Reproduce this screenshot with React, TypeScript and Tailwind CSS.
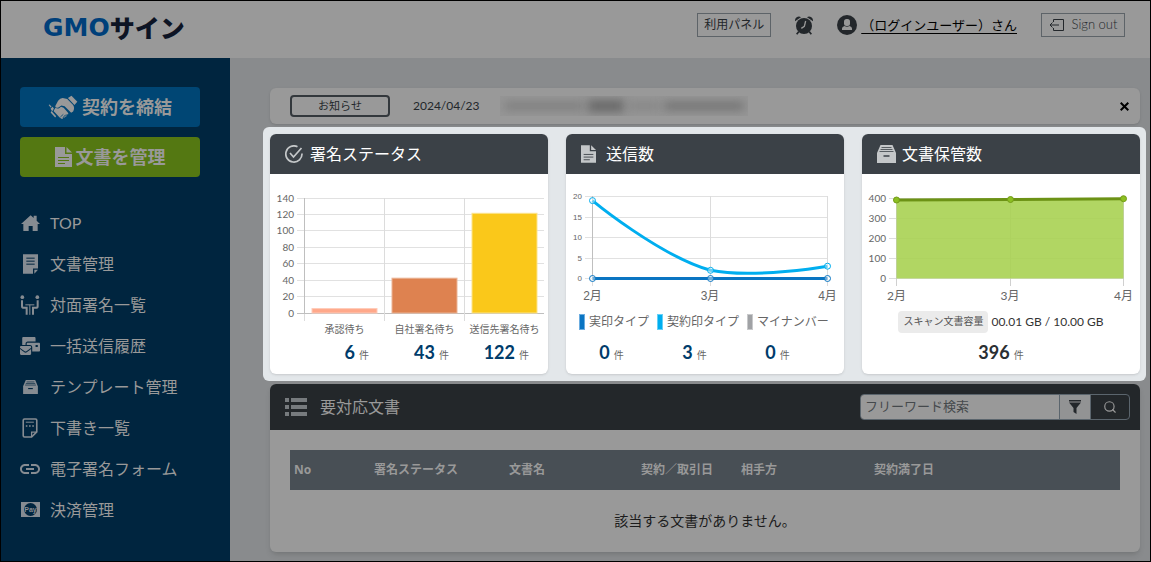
import type { ReactNode } from "react";
import { Search } from "lucide-react";
import { FaMailBulk } from "react-icons/fa";
import { MdLink } from "react-icons/md";

/* ---------- Icons ---------- */

function HandshakeIcon() {
  return (
    <svg className="w-[30px] h-[25px]" viewBox="142 282 92 76" fill="currentColor">
      <path d="M203 291l11-7 18 18-9 10z" />
      <path d="M201 294l-14-3q-8 0-14 8l-9 17q2 7 10 4l9-6 10 2 20 20 6-4q6-12 0-20z" />
      <path d="M165 321l-6 10 18 19q4 4 8 5 5-1 3-5 5 2 7-2 5 0 5-5 6-1 4-6l-14-16-8-3-6 4q-6 3-11-1z" />
      <path d="M150 324l6-6 4 5-5 9z" />
      <path d="M144 312l3-1 6 7-3 2z" />
      <path d="M153 331l14 16-3 4-14-16z" />
      <path d="M180 349l9-8M188 351l8-9M195 347l7-7" stroke="#004674" strokeWidth="2.5" fill="none" />
    </svg>
  );
}

function FileIcon({ className, line }: { className: string; line: string }) {
  return (
    <svg className={className} viewBox="0 0 17 20" fill="currentColor">
      <path d="M0 0h10v7h7v13H0z" />
      <path d="M11.5 0v5.500h5.500z" />
      <path d="M3 10.500h11M3 13.500h11M3 16.500h7" stroke={line} strokeWidth="1" />
    </svg>
  );
}

function BoxIcon({ className, line }: { className: string; line: string }) {
  return (
    <svg className={className} viewBox="0 0 19 18" fill="currentColor">
      <path d="M3.500 0h12L19 8v10H0V8z" />
      <path d="M4.500 2.500h10M3.500 4.500h12M2.500 6.500h14" stroke={line} strokeWidth="0.8" />
      <path d="M6.500 11h6" stroke={line} strokeWidth="1.500" />
    </svg>
  );
}

function CheckCircleIcon() {
  return (
    <svg className="size-[18px]" viewBox="0 0 18 18" fill="none" stroke="currentColor" strokeWidth="1.700">
      <path d="M12.500 1.700A8.100 8.100 0 1 0 17 8.500" />
      <path d="M5 8l3.500 4L16.500 3" />
    </svg>
  );
}

function HomeIcon() {
  return (
    <svg className="w-[19px] h-4" viewBox="60 75 57 48" fill="currentColor">
      <path d="M60 102l29-26 9 8v-7h9v15l10 10h-7v21H95v-15H83v15H67v-21z" />
    </svg>
  );
}

function NoteIcon() {
  return (
    <svg className="w-[15px] h-5" viewBox="66 192 45 59" fill="currentColor">
      <path d="M66 192h45v43H96v16H66z" />
      <path d="M100 239h11l-11 12z" />
      <path d="M76 204h25M76 213h25M76 222h25" stroke="#00253f" strokeWidth="3" />
    </svg>
  );
}

function MeetingIcon() {
  return (
    <svg className="size-5" viewBox="61 317 60 59" fill="none" stroke="currentColor">
      <circle cx="68" cy="323" r="5.500" fill="currentColor" stroke="none" />
      <circle cx="113" cy="323" r="5.500" fill="currentColor" stroke="none" />
      <path d="M67 332v18q0 5 6 5h8v21M114 332v18q0 5-6 5h-8v21" strokeWidth="6" />
      <path d="M77 346h27M90.500 346v30" strokeWidth="3" />
    </svg>
  );
}

function DraftIcon() {
  return (
    <svg className="w-4 h-5" viewBox="66 683 48 62" fill="none" stroke="currentColor" strokeWidth="5">
      <path d="M111 726v-36q0-4-4-4H73q-4 0-4 4v48q0 4 4 4h22z" />
      <path d="M95 742v-15h16" strokeWidth="4" />
      <path d="M77 696h25" strokeWidth="3" />
      <path d="M77 708h26" strokeDasharray="5 5" />
    </svg>
  );
}

function PayIcon() {
  return (
    <svg className="w-[19px] h-[15px]" viewBox="0 0 19 15">
      <rect width="19" height="15" fill="currentColor" />
      <circle cx="9.500" cy="7.500" r="6.500" fill="#00253f" />
      <text x="9.500" y="10" textAnchor="middle" fontSize="7" fontWeight="bold" fontFamily="Liberation Sans" fill="currentColor">
        Pay
      </text>
    </svg>
  );
}

function AlarmIcon() {
  return (
    <svg className="w-[18px] h-[19px]" viewBox="348 43 54 57">
      <circle cx="375" cy="73" r="24" fill="#23272b" />
      <path d="M348 59q-1-9 6-13 7-3 12 1zM402 59q1-9-6-13-7-3-12 1z" fill="#23272b" />
      <path d="M359 90l-6 8M391 90l6 8" stroke="#23272b" strokeWidth="5" />
      <path d="M380 58l-4 16-9 6" stroke="#999" strokeWidth="4" fill="none" />
    </svg>
  );
}

function UserIcon() {
  return (
    <svg className="size-5" viewBox="0 0 20 20">
      <circle cx="10" cy="10" r="10" fill="#23272b" />
      <rect x="7" y="4" width="6" height="7" rx="2.500" fill="#999" />
      <path d="M5 15v-1.500q0-2 2.500-2.500 2.500 1.500 5 0 2.500.5 2.500 2.500V15z" fill="#999" />
    </svg>
  );
}

function SignOutIcon() {
  return (
    <svg className="w-[15px] h-3" viewBox="0 0 15 12" fill="none" stroke="currentColor">
      <path d="M4.500 3V.5h10v11h-10V9M10 6H1M3.500 3.500L1 6l2.500 2.500" />
    </svg>
  );
}

function ListIcon() {
  return (
    <svg className="w-[22px] h-[18px]" viewBox="0 0 22 18" fill="#777b7e">
      <path d="M0 0h4v4H0zM0 7h4v4H0zM0 14h4v4H0zM6 0h16v4H6zM6 7h16v4H6zM6 14h16v4H6z" />
    </svg>
  );
}

function FilterIcon() {
  return (
    <svg className="w-3 h-[14px]" viewBox="0 0 12 14" fill="currentColor">
      <path d="M0 0h12v1.500H0zM0 2.500h12L7.500 8v6l-3-2V8z" />
    </svg>
  );
}

/* ---------- Data ---------- */

const menu: { label: string; icon: ReactNode }[] = [
  { label: "TOP", icon: <HomeIcon /> },
  { label: "文書管理", icon: <NoteIcon /> },
  { label: "対面署名一覧", icon: <MeetingIcon /> },
  { label: "一括送信履歴", icon: <FaMailBulk className="size-5" /> },
  { label: "テンプレート管理", icon: <BoxIcon className="w-[15px] h-[14px]" line="#00253f" /> },
  { label: "下書き一覧", icon: <DraftIcon /> },
  { label: "電子署名フォーム", icon: <MdLink className="size-6 shrink-0" /> },
  { label: "決済管理", icon: <PayIcon /> },
];

const statusBars = [
  { label: "承認待ち", count: 6, x: 42, fill: "#ffa88a", edge: "#ffcbb9" },
  { label: "自社署名待ち", count: 43, x: 122, fill: "#de8250", edge: "#ebb496" },
  { label: "送信先署名待ち", count: 122, x: 202, fill: "#fac81a", edge: "#fce48d" },
];

const sendTypes = [
  { label: "実印タイプ", count: 0, swatch: "bg-[#0a75c2] border-[#6cade0]" },
  { label: "契約印タイプ", count: 3, swatch: "bg-[#00aeef] border-[#66d0f7]" },
  { label: "マイナンバー", count: 0, swatch: "bg-[#a0a2a5] border-[#c8c9cb]" },
];

const months = ["2月", "3月", "4月"];

/* ---------- Charts ---------- */

function StatusChart() {
  const bottom = 139.5;
  const unit = 115 / 140;
  return (
    <svg className="block w-full" viewBox="0 0 278 166" fontFamily="Lato, 'Noto Sans CJK JP', sans-serif" fontSize="10" fill="#666">
      {[0, 20, 40, 60, 80, 100, 120, 140].map((v) => (
        <g key={v}>
          <path d={`M27 ${Math.round(bottom - v * unit) - 0.5}H274`} stroke={v === 0 ? "#bfbfbf" : "#e1e1e1"} />
          <text x="24" y={bottom - v * unit + 3} textAnchor="end">{v}</text>
        </g>
      ))}
      <path d="M114.500 24V147M194.500 24V147M34.500 139V147" stroke="#dcdcdc" />
      <path d="M34.500 24V140" stroke="#bfbfbf" />
      {statusBars.map((b) => (
        <g key={b.label}>
          <rect x={b.x} y={bottom - b.count * unit} width="65" height={b.count * unit - 0.5} fill={b.fill} stroke={b.edge} />
          <text x={b.x + 32.5} y="159" textAnchor="middle">{b.label}</text>
        </g>
      ))}
    </svg>
  );
}

function SendChart() {
  return (
    <svg className="block w-full" viewBox="0 0 278 130" fontFamily="'Liberation Sans', 'Noto Sans CJK JP', sans-serif" fill="#666">
      {[0, 5, 10, 15, 20].map((v) => (
        <g key={v}>
          <path d={`M19 ${Math.round(104 - v * 4.1) + 0.5}H262`} stroke="#e1e1e1" />
          <text x="16" y={107 - v * 4.1} textAnchor="end" fontSize="8">{v}</text>
        </g>
      ))}
      <path d="M144.500 22V112M261.500 22V112M26.500 104V112" stroke="#dcdcdc" />
      <path d="M26.500 22V104" stroke="#bfbfbf" />
      <g fill="none" strokeWidth="3">
        <path d="M26.500 26.600C26.500 26.600 93.800 82.100 144.500 96.300C187.700 105 261.500 92.200 261.500 92.200" stroke="#00aeef" />
        <path d="M26.500 104.500H261.500" stroke="#0a75c2" />
      </g>
      <g fill="#fff" fillOpacity="0.4" stroke="#00aeef">
        <circle cx="26.500" cy="26.600" r="3" />
        <circle cx="144.500" cy="96.300" r="3" />
        <circle cx="261.500" cy="92.200" r="3" />
      </g>
      <g fill="#fff" fillOpacity="0.4" stroke="#0a75c2">
        <circle cx="26.500" cy="104.500" r="3" />
        <circle cx="144.500" cy="104.500" r="3" />
        <circle cx="261.500" cy="104.500" r="3" />
      </g>
      {months.map((m, i) => (
        <text key={m} x={26.5 + i * 117.5} y="126" textAnchor="middle" fontSize="12">{m}</text>
      ))}
    </svg>
  );
}

function StorageChart() {
  return (
    <svg className="block w-full" viewBox="0 0 278 130" fontFamily="Lato, 'Noto Sans CJK JP', sans-serif" fill="#666">
      {[0, 100, 200, 300, 400].map((v) => (
        <g key={v}>
          <path d={`M27 ${104.5 - v * 0.2}H262`} stroke="#dcdcdc" />
          <text x="24" y={107.5 - v * 0.2} textAnchor="end" fontSize="10">{v}</text>
        </g>
      ))}
      <path d="M34.500 24V112M148.500 24V112M261.500 24V112" stroke="#d0d0d0" />
      <path d="M34.500 26L148.500 25.500L261.500 24.700V104.500H34.500z" fill="#a9d252" fillOpacity="0.9" />
      <path d="M34.500 26L148.500 25.500L261.500 24.700" stroke="#6c9215" strokeWidth="3" fill="none" />
      <g fill="#8cbf22" stroke="#739b17">
        <circle cx="34.500" cy="26" r="3" />
        <circle cx="148.500" cy="25.500" r="3" />
        <circle cx="261.500" cy="24.700" r="3" />
      </g>
      {months.map((m, i) => (
        <text key={m} x={34.5 + i * 113.5} y="126" textAnchor="middle" fontSize="12">{m}</text>
      ))}
    </svg>
  );
}

/* ---------- Parts ---------- */

function Card({ title, icon, children }: { title: string; icon: ReactNode; children: ReactNode }) {
  return (
    <section className="bg-white rounded-md overflow-hidden shadow-sm pb-[10px]">
      <h2 className="h-10 pl-[15px] flex items-center bg-[#3b4147] text-white text-base">
        <span className="w-[25px] text-[#c4c7c9]">{icon}</span>
        {title}
      </h2>
      {children}
    </section>
  );
}

function Count({ value, className }: { value: number; className: string }) {
  return (
    <p className={`h-6 flex items-baseline gap-1 text-lg leading-6 font-bold ${className}`}>
      {value}
      <small className="text-[10px] leading-none font-normal text-[#666]">件</small>
    </p>
  );
}

function Header() {
  return (
    <header className="h-[57px] pl-[42px] pr-[25px] flex items-start justify-between bg-[#999]">
      <a href="#top" className="pt-[15px] flex items-center leading-6 font-black">
        <span className="font-['DejaVu_Sans'] font-bold text-[25px] text-[#00407a]">GMO</span>
        <span className="text-[25px] text-[#0d1424]">サイン</span>
      </a>
      <div className="pt-3 flex items-center gap-6 text-[#23272b]">
        <button className="h-6 w-[74px] border border-[#5d6368] text-xs">利用パネル</button>
        <button aria-label="通知"><AlarmIcon /></button>
        <a href="#user" className="flex items-center gap-1 text-[13px] leading-5 text-black">
          <UserIcon />
          <span className="underline underline-offset-3">（ログインユーザー）さん</span>
        </a>
        <button className="h-6 w-[84px] flex items-center justify-center gap-2 border border-[#5d6368] text-[13px] font-light">
          <SignOutIcon />
          Sign out
        </button>
      </div>
    </header>
  );
}

function Sidebar() {
  return (
    <aside className="w-[229px] shrink-0 pt-[29px] pl-[19px] pr-[30px] bg-[#00253f] text-[#999]">
      <div className="flex flex-col gap-[10px] text-lg font-bold">
        <button className="h-10 flex items-center justify-center gap-1 rounded-sm bg-[#004674]">
          <HandshakeIcon />
          契約を締結
        </button>
        <button className="h-10 flex items-center justify-center gap-1 rounded-sm bg-[#547812]">
          <FileIcon className="w-[17px] h-5" line="#547812" />
          文書を管理
        </button>
      </div>
      <nav className="mt-[25px]">
        <ul>
          {menu.map((item) => (
            <li key={item.label}>
              <a href="#menu" className="h-[41px] flex items-center gap-[10px] whitespace-nowrap text-base">
                <span className="w-5 flex justify-center text-[#868c92]">{item.icon}</span>
                {item.label}
              </a>
            </li>
          ))}
        </ul>
      </nav>
    </aside>
  );
}

function Notice() {
  return (
    <div className="h-9 pl-5 pr-1 flex items-center rounded-md bg-[#999] shadow-sm text-[#23272b]">
      <span className="w-[100px] h-[22px] flex items-center justify-center border-2 border-[#33383c] rounded-sm text-[11px]">お知らせ</span>
      <time className="w-[87px] ml-[23px] text-xs">2024/04/23</time>
      <div aria-hidden="true" className="h-5 flex items-center gap-1 overflow-hidden px-1 bg-[#969696]">
        <span className="w-20 h-2 bg-[#7d7d7d] blur-[5px]"></span>
        <span className="w-9 h-3 bg-[#686868] blur-[5px]"></span>
        <span className="w-8 h-2 bg-[#858585] blur-[5px]"></span>
        <span className="w-20 h-2 bg-[#707070] blur-[5px]"></span>
      </div>
      <button aria-label="閉じる" className="ml-auto size-6 flex items-center justify-center text-black">
        <svg className="size-[9px]" viewBox="0 0 9 9" stroke="currentColor" strokeWidth="2">
          <path d="M.7.7l7.600 7.600M8.300.7L.7 8.300" />
        </svg>
      </button>
    </div>
  );
}

function Documents() {
  return (
    <section className="mt-[3px] rounded-md overflow-hidden bg-[#999] shadow-md">
      <div className="h-[46px] pl-[15px] pr-[10px] flex items-center bg-[#23272a]">
        <ListIcon />
        <h2 className="ml-[13px] text-base text-[#999]">要対応文書</h2>
        <form className="ml-auto h-[26px] flex border border-[#5b656d] rounded-sm overflow-hidden">
          <input
            type="text"
            aria-label="フリーワード検索"
            placeholder="フリーワード検索"
            className="w-[198px] px-1 bg-[#999] text-[13px] placeholder:text-[#45494c]"
          />
          <button type="button" aria-label="絞り込み" className="w-8 flex items-center justify-center border-x border-[#5b656d] bg-[#929394] text-[#23272b]">
            <FilterIcon />
          </button>
          <button type="submit" aria-label="検索" className="w-[38px] flex items-center justify-center text-[#999]">
            <Search className="size-[14px]" strokeWidth={2} />
          </button>
        </form>
      </div>
      <div className="px-5 pt-5">
        <table className="w-full table-fixed">
          <thead>
            <tr className="h-10 bg-[#484f55] text-left text-xs text-[#999]">
              <th className="w-[80px] px-1 font-['Noto_Sans']">No</th>
              <th className="w-[135px] px-1">署名ステータス</th>
              <th className="w-[132px] px-1">文書名</th>
              <th className="w-[100px] px-1">契約／取引日</th>
              <th className="w-[133px] px-1">相手方</th>
              <th className="px-1">契約満了日</th>
            </tr>
          </thead>
          <tbody>
            <tr className="h-[62px]">
              <td colSpan={6} className="text-center text-sm text-[#1c1c1c]">該当する文書がありません。</td>
            </tr>
          </tbody>
        </table>
      </div>
    </section>
  );
}

export default function App() {
  return (
    <div className="min-h-screen flex flex-col border border-black bg-[#898b8d] font-[Lato,'Noto_Sans_CJK_JP',sans-serif]">
      <Header />
      <div className="flex-1 flex">
        <Sidebar />
        <main className="flex-1 min-w-0 pt-[30px] pl-10 pr-[10px] pb-[9px]">
          <Notice />

          {/* Highlighted summary cards */}
          <div className="mt-[3px] -ml-[7px] -mr-[6px] py-[7px] pl-[7px] pr-[6px] grid grid-cols-3 gap-[18px] rounded-md bg-[#e3e7ea]">
            <Card title="署名ステータス" icon={<CheckCircleIcon />}>
              <StatusChart />
              <div className="pl-[34px] pr-1 grid grid-cols-3 text-[#003c6b]">
                {statusBars.map((b) => (
                  <Count key={b.label} value={b.count} className="justify-end pr-[15px]" />
                ))}
              </div>
            </Card>

            <Card title="送信数" icon={<FileIcon className="w-[15px] h-[18px]" line="#3b4147" />}>
              <SendChart />
              <ul className="h-9 pl-[13px] flex items-center gap-2 whitespace-nowrap text-xs text-[#666]">
                {sendTypes.map((t) => (
                  <li key={t.label} className="flex items-center gap-1">
                    <span className={`w-[6px] h-4 border ${t.swatch}`}></span>
                    {t.label}
                  </li>
                ))}
              </ul>
              <div className="pl-1 pr-[25px] grid grid-cols-3 text-[#003c6b]">
                {sendTypes.map((t) => (
                  <Count key={t.label} value={t.count} className="justify-center" />
                ))}
              </div>
            </Card>

            <Card title="文書保管数" icon={<BoxIcon className="w-[19px] h-[18px]" line="#3b4147" />}>
              <StorageChart />
              <p className="h-9 flex items-center justify-center gap-[3px] text-xs text-[#333]">
                <span className="h-[22px] px-[5px] flex items-center rounded-sm bg-[#ebebeb] text-[10px] text-[#555]">スキャン文書容量</span>
                00.01 GB / 10.00 GB
              </p>
              <Count value={396} className="justify-center text-[#2b2f33]" />
            </Card>
          </div>

          <Documents />
        </main>
      </div>
    </div>
  );
}
